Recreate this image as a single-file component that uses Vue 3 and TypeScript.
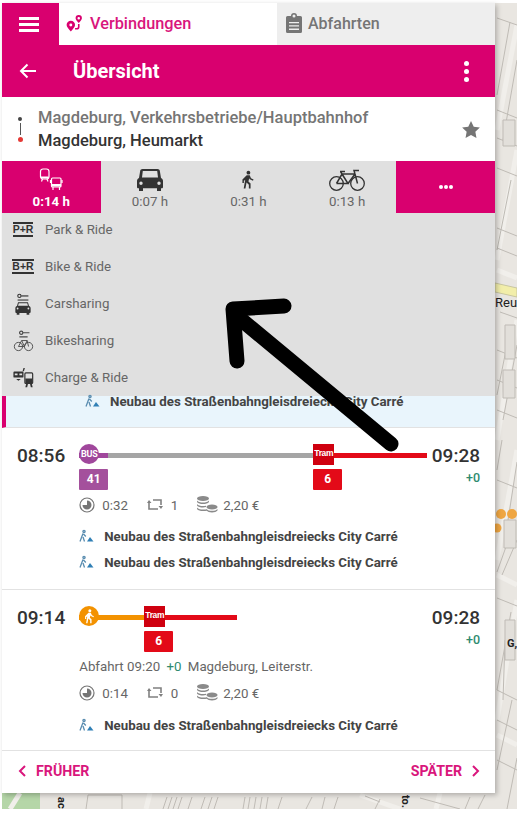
<script setup lang="ts">
const modes = [
  { id: 'pt', time: '0:14 h', active: true },
  { id: 'car', time: '0:07 h', active: false },
  { id: 'walk', time: '0:31 h', active: false },
  { id: 'bike', time: '0:13 h', active: false },
]

const options = [
  { id: 'pr', label: 'Park & Ride', badge: 'P+R' },
  { id: 'br', label: 'Bike & Ride', badge: 'B+R' },
  { id: 'cs', label: 'Carsharing', badge: '' },
  { id: 'bs', label: 'Bikesharing', badge: '' },
  { id: 'cr', label: 'Charge & Ride', badge: '' },
]

const alertText = 'Neubau des Straßenbahngleisdreiecks City Carré'

const trips = [
  {
    dep: '08:56',
    arr: '09:28',
    height: 162,
    duration: '0:32',
    changes: '1',
    depart: null as null | string,
    alerts: 2,
    first: { kind: 'bus', color: '#a5a5a5', lead: '#a0479c', line: '41', lineColor: '#a4509c' },
    trackWidth: 234,
    tramWidth: 114,
  },
  {
    dep: '09:14',
    arr: '09:28',
    height: 161,
    duration: '0:14',
    changes: '0',
    depart: 'Magdeburg, Leiterstr.',
    alerts: 1,
    first: { kind: 'walk', color: '#f39200', lead: '#f39200', line: '', lineColor: '' },
    trackWidth: 65,
    tramWidth: 93,
  },
]

// streets (white bands) and building outlines on the visible map strip
const mapStreets = [
  'M517 25L497 130', 'M517 150L497 260', 'M497 270L517 278', 'M517 320L497 440', 'M517 450L497 560',
  'M497 575L517 585', 'M517 600L497 720', 'M497 735L517 745', 'M20 793L10 809', 'M150 793L146 809',
  'M360 795L400 809', 'M440 793L436 809',
]
const mapLines = [
  'M497 18L517 25', 'M510 22L497 95', 'M517 60L503 140', 'M497 110L517 118', 'M497 138L517 146',
  'M497 168L517 176', 'M511 180L497 250', 'M497 228L517 236', 'M497 248L517 256', 'M500 312L517 318',
  'M511 325L497 395', 'M517 345L503 420', 'M497 350L517 358', 'M497 380L517 388', 'M497 410L517 418',
  'M502 440L497 470', 'M517 462L505 540', 'M497 480L517 488', 'M512 530L497 572', 'M517 540L502 575',
  'M497 598L517 606', 'M511 612L497 690', 'M505 640L503 700', 'M497 690L517 700', 'M512 700L497 770',
  'M497 720L517 730', 'M497 760L517 770', 'M517 758L507 809', 'M88 795H122V809', 'M88 795L86 809',
  'M167 797L163 809', 'M172 797L168 809', 'M177 797L173 809', 'M182 797L178 809', 'M192 797L188 809',
  'M205 797L201 809', 'M212 797L208 809', 'M218 797L214 809', 'M245 797L243 809', 'M250 797L248 809',
  'M256 797L254 809', 'M262 797L260 809', 'M268 797L266 809', 'M282 797L278 809', 'M312 797L306 809',
  'M325 797L322 809', 'M338 797L334 809', 'M365 796L380 802', 'M380 799L375 809', 'M420 798L460 809',
  'M470 797L465 809', 'M485 795L478 809',
]
</script>

<template>
  <div class="screen">
    <div class="map">
      <svg class="map-art" viewBox="0 0 521 816" width="521" height="816">
        <rect x="2" y="793" width="38" height="16" fill="#b5d6a8" />
        <path v-for="d in mapStreets" :key="d" :d="d" stroke="#f1efeb" stroke-width="5" fill="none" />
        <path d="M495 283L517 288V297L495 292Z" fill="#f2eeaa" stroke="#c9c7a0" />
        <path v-for="d in mapLines" :key="d" :d="d" stroke="#bfbbb5" stroke-width="1" fill="none" />
        <path d="M503 120h12v26h-12zM505 325h10v34h-10zM503 370h12v28h-12zM504 520h12v28h-12zM505 620h10v40h-10z" fill="#e2dfda" stroke="#bfbbb5" />
        <circle cx="501" cy="514" r="5" fill="#efa642" />
        <circle cx="512" cy="514" r="5" fill="#efa642" />
        <circle cx="497" cy="528" r="4.500" fill="#efa642" />
        <text x="495" y="307" class="map-label">Reu</text>
        <text x="507" y="647" class="map-label small">G,</text>
        <text x="0" y="0" class="map-label small" transform="translate(58 797) rotate(90)">ac</text>
        <text x="0" y="0" class="map-label small" transform="translate(402 795) rotate(90)">to.</text>
      </svg>
    </div>

    <main class="panel">
      <nav class="tabs">
        <button class="menu" aria-label="Menü">
          <span></span><span></span><span></span>
        </button>
        <div class="tab tab-active">
          <svg width="20" height="19" viewBox="0 0 18 18" fill="#d9006f">
            <path d="M6 6.500a4 4 0 0 1 4 4c0 1.800-2 3.800-4 6-2-2.200-4-4.200-4-6a4 4 0 0 1 4-4zm0 2.600a1.400 1.400 0 1 0 0 2.800 1.400 1.400 0 0 0 0-2.800z" />
            <path fill-rule="evenodd" d="M13.500 1a3 3 0 0 1 3 3c0 1.300-1.500 2.900-3 4.600-1.500-1.700-3-3.300-3-4.600a3 3 0 0 1 3-3zm0 1.800a1.200 1.200 0 1 0 0 2.400 1.200 1.200 0 0 0 0-2.400z" />
            <path d="M13.500 9.500v2.500a2 2 0 0 1-2 2H10" fill="none" stroke="#d9006f" stroke-width="1.500" />
          </svg>
          <span>Verbindungen</span>
        </div>
        <div class="tab">
          <svg width="16" height="20" viewBox="0 0 16 20" fill="#757575">
            <path fill-rule="evenodd" d="M1.500 3H5a3 3 0 0 1 6 0h3.500A1.500 1.500 0 0 1 16 4.500v14a1.500 1.500 0 0 1-1.500 1.500h-13A1.500 1.500 0 0 1 0 18.500v-14A1.500 1.500 0 0 1 1.500 3zM8 1.600a1.500 1.500 0 1 0 0 3 1.500 1.500 0 0 0 0-3zM3 9v1.300h10V9zm0 3.300v1.300h10v-1.300zm0 3.300v1.300h10v-1.300z" />
          </svg>
          <span>Abfahrten</span>
        </div>
      </nav>

      <header class="title-bar">
        <svg class="back" width="18" height="16" viewBox="0 0 18 16" fill="none" stroke="#fff" stroke-width="2">
          <path d="M17 8H2M8.500 1.500L2 8l6.500 6.500" />
        </svg>
        <h1>Übersicht</h1>
        <div class="kebab"><i></i><i></i><i></i></div>
      </header>

      <section class="route">
        <div class="route-marks">
          <i class="mark-start"></i>
          <i class="mark-line"></i>
          <i class="mark-end"></i>
        </div>
        <div class="route-names">
          <div class="from">Magdeburg, Verkehrsbetriebe/Hauptbahnhof</div>
          <div class="to">Magdeburg, Heumarkt</div>
        </div>
        <svg width="18" height="17" viewBox="0 0 24 23" fill="#757575">
          <path d="M12 0l3.700 7.700 8.300 1.100-6.100 5.800 1.500 8.400-7.400-4-7.400 4 1.500-8.400L0 8.800l8.300-1.100z" />
        </svg>
      </section>

      <section class="modes">
        <div v-for="m in modes" :key="m.id" class="mode" :class="{ on: m.active }">
          <svg v-if="m.id === 'pt'" width="24" height="24" viewBox="0 0 24 24" fill="none" stroke="#fff" stroke-width="1.200">
            <rect x="1.500" y="1" width="8.500" height="10" rx="2.500" />
            <path d="M3.500 11l-1 2.500M8 11l1 2.500" />
            <path fill="#fff" stroke="none" d="M2 8.500h7.500v2H2z" />
            <rect x="12.500" y="10" width="9.500" height="9" rx="1" />
            <path d="M14 19v3M20.500 19v3M11.500 12v3M23 12v3" />
            <path fill="#fff" stroke="none" d="M13 16h9v2.500h-9z" />
          </svg>
          <svg v-else-if="m.id === 'car'" width="26" height="24" viewBox="0 0 26 24" fill="#333">
            <path fill-rule="evenodd" d="M5.500 1h15c1.300 0 2 .7 2.300 1.800L24 10c1.200.6 2 1.500 2 3v6c0 .8-.5 1.300-1.300 1.300H24V23h-4v-2.700H6V23H2v-2.700h-.7C.5 20.300 0 19.800 0 19v-6c0-1.500.8-2.400 2-3l1.200-7.200C3.500 1.700 4.200 1 5.500 1zm.3 2L5 9.500h16L20.200 3zM4 13.500a1.700 1.700 0 1 0 0 3.400 1.700 1.700 0 0 0 0-3.400zm18 0a1.700 1.700 0 1 0 0 3.400 1.700 1.700 0 0 0 0-3.400z" />
          </svg>
          <svg v-else-if="m.id === 'walk'" class="walker" width="12" height="20" viewBox="0 0 14 22" fill="#333">
            <circle cx="7.500" cy="2.500" r="2.200" />
            <path d="M5.500 5.500h3.500l1.500 3.500 3 1.500-.7 1.500-3.800-1.800-.6-1.200-.9 3.700 2.500 2.500V21H8v-4.500l-2.700-2.500L4 21H2l1.700-10-1.500.8V14.500H.5V10.500z" />
          </svg>
          <svg v-else width="36" height="24" viewBox="0 0 36 24" fill="none" stroke="#333" stroke-width="1.300">
            <circle cx="7.500" cy="15.500" r="6.800" />
            <circle cx="28.500" cy="15.500" r="6.800" />
            <path d="M7.500 15.500L13 6h13l2.500 9.500M13 6l6 9.500h-11.500M26 6l-7 9.500M11 3.500h5M13 6l-1.500-2.500M26 6l-1-3.500h5" stroke-width="1.500" />
          </svg>
          <span>{{ m.time }}</span>
        </div>
        <div class="mode more on"><b></b><b></b><b></b></div>
      </section>

      <section class="options">
        <div v-for="o in options" :key="o.id" class="option">
          <div class="opt-icon">
            <span v-if="o.badge" class="plate">{{ o.badge }}</span>
            <svg v-else-if="o.id === 'cs'" width="18" height="22" viewBox="0 0 20 24" fill="#333">
              <circle cx="6" cy="3" r="1.800" fill="none" stroke="#333" stroke-width="1.200" />
              <path d="M8 2.400h8v1.300H8z" />
              <path d="M4 7h12v1.200H4z" />
              <path fill-rule="evenodd" d="M4.500 10h11l1.200 4.200c1 .4 1.800 1.200 1.800 2.300V21c0 .6-.4 1-1 1H17v2h-3v-2H6v2H3v-2H2.500c-.6 0-1-.4-1-1v-4.500c0-1.100.8-1.900 1.800-2.300zm.8 1.300l-.8 2.700h11l-.8-2.700zM4 16a1 1 0 1 0 0 2 1 1 0 0 0 0-2zm12 0a1 1 0 1 0 0 2 1 1 0 0 0 0-2z" />
            </svg>
            <svg v-else-if="o.id === 'bs'" width="21" height="22" viewBox="0 0 21 24" fill="none" stroke="#4a4a4a" stroke-width="1">
              <circle cx="8" cy="3" r="1.800" stroke-width="1.300" />
              <path d="M10 3h7M6 7.500h9" stroke-width="1.300" />
              <circle cx="5" cy="18" r="4.500" />
              <circle cx="16" cy="18" r="4.500" />
              <path d="M5 18l3.500-6.500h6l1.500 6.500M8.500 11.500l3 6.500H5M14.500 11.500l-3 6.500" />
            </svg>
            <svg v-else width="21" height="22" viewBox="0 0 22 24" fill="#333">
              <path fill-rule="evenodd" d="M1 5h9c.6 0 1 .4 1 1v4.500c0 .6-.4 1-1 1H1c-.6 0-1-.4-1-1V6c0-.6.4-1 1-1zm.5 2v2h3V7zm5 0v2h3V7z" />
              <path d="M3 13h5l-2.500 2z" />
              <path d="M11 1l1.500 0-1 3.500h-1.500z" />
              <path fill="none" stroke="#333" stroke-width="1.300" d="M13.500 6.500h6.500a1 1 0 0 1 1 1V17a1 1 0 0 1-1 1h-6.500a1 1 0 0 1-1-1V7.500a1 1 0 0 1 1-1z" />
              <path d="M13 12.500h7.500V18H13zM14 18h2l-1 4h-2zM18 18h2l1 4h-2z" />
            </svg>
          </div>
          <span>{{ o.label }}</span>
        </div>
      </section>

      <section class="alert-rest">
        <div class="alert">
          <svg class="alert-icon" width="16" height="14" viewBox="0 0 16 14">
            <path d="M5 1.500a1.100 1.100 0 1 1 0 2.200 1.100 1.100 0 0 1 0-2.200zM4 4.500L1 12.500M4.500 5l2.300 2.500M4 8l1.500 4.500" stroke="#5a8db0" stroke-width="1.300" fill="none" />
            <path d="M8 12.500l3-4.500 3.500 4.500z" fill="#2f7fb5" />
          </svg>
          <span>{{ alertText }}</span>
        </div>
      </section>

      <article v-for="t in trips" :key="t.dep" class="trip" :style="{ height: t.height + 'px' }">
        <div class="time">{{ t.dep }}</div>
        <div class="trip-main">
          <div class="track">
            <div class="leg" :style="{ width: t.trackWidth + 'px' }">
              <div class="leg-bar" :style="{ background: t.first.color }"></div>
              <div v-if="t.first.kind === 'bus'" class="leg-lead" :style="{ background: t.first.lead }"></div>
              <div class="disc" :style="{ background: t.first.lead }">
                <span v-if="t.first.kind === 'bus'">BUS</span>
                <svg v-else width="11" height="15" viewBox="0 0 14 22" fill="#fff">
                  <circle cx="7.500" cy="2.500" r="2.200" />
                  <path d="M5.500 5.500h3.500l1.500 3.500 3 1.500-.7 1.500-3.800-1.800-.6-1.200-.9 3.700 2.500 2.500V21H8v-4.500l-2.700-2.500L4 21H2l1.700-10-1.500.8V14.500H.5V10.500z" />
                </svg>
              </div>
              <span v-if="t.first.line" class="line-tag" :style="{ background: t.first.lineColor }">{{ t.first.line }}</span>
            </div>
            <div class="leg" :style="{ width: t.tramWidth + 'px' }">
              <div class="leg-bar tram-bar"></div>
              <div class="tram-box">Tram</div>
              <span class="line-tag tram-tag">6</span>
            </div>
          </div>
          <div v-if="t.depart" class="depart">
            Abfahrt 09:20 <em>+0</em> {{ t.depart }}
          </div>
          <div class="facts">
            <span class="fact">
              <svg width="16" height="16" viewBox="0 0 16 16" fill="none">
                <circle cx="8" cy="8" r="7" stroke="#757575" stroke-width="1.200" />
                <path d="M8 3.500A4.500 4.500 0 1 1 3.500 8H8z" fill="#757575" />
              </svg>
              {{ t.duration }}
            </span>
            <span class="fact changes">
              <svg width="16" height="14" viewBox="0 0 16 14" fill="none" stroke="#808080" stroke-width="1.600">
                <path d="M6 2h8v5M2 4v7h9" />
                <path d="M0 5l2-3 2.500 3zM11.500 8l2.500 3 2-3z" fill="#808080" stroke="none" />
              </svg>
              {{ t.changes }}
            </span>
            <span class="fact price">
              <svg width="22" height="18" viewBox="0 0 22 18" fill="#8a8a8a">
                <ellipse cx="7" cy="2.500" rx="6" ry="2.500" />
                <path d="M1 4.500c1 1.500 3.500 2 6 2s5-.5 6-2V6c-1 1.500-3.500 2-6 2s-5-.5-6-2z" />
                <path d="M1 8c1 1.500 3.500 2 6 2 1 0 2 0 3-.3V11c-1 .3-2 .5-3 .5-2.500 0-5-.5-6-2z" />
                <path d="M1 11.500c1 1.500 3.500 2 6 2 1 0 2 0 3.500-.3l1 1.300c-1.500.4-3 .5-4.500.5-2.500 0-5-.5-6-2z" />
                <ellipse cx="16" cy="11" rx="5.500" ry="2.500" />
                <path d="M10.500 13c1 1.300 3 1.800 5.500 1.800s4.500-.5 5.500-1.800v1.500c-1 1.300-3 2-5.500 2s-4.500-.7-5.500-2z" />
              </svg>
              2,20 €
            </span>
          </div>
          <div v-for="n in t.alerts" :key="n" class="alert">
            <svg class="alert-icon" width="16" height="14" viewBox="0 0 16 14">
              <path d="M5 1.500a1.100 1.100 0 1 1 0 2.200 1.100 1.100 0 0 1 0-2.200zM4 4.500L1 12.500M4.500 5l2.300 2.500M4 8l1.500 4.500" stroke="#5a8db0" stroke-width="1.300" fill="none" />
              <path d="M8 12.500l3-4.500 3.500 4.500z" fill="#2f7fb5" />
            </svg>
            <span>{{ alertText }}</span>
          </div>
        </div>
        <div class="arrival">
          <div class="time">{{ t.arr }}</div>
          <div class="delay">+0</div>
        </div>
      </article>

      <footer class="pager">
        <span class="page-link">
          <svg width="8" height="12" viewBox="0 0 8 12" fill="none" stroke="#d9167c" stroke-width="2"><path d="M7 1L2 6l5 5" /></svg>
          FRÜHER
        </span>
        <span class="page-link">
          SPÄTER
          <svg width="8" height="12" viewBox="0 0 8 12" fill="none" stroke="#d9167c" stroke-width="2"><path d="M1 1l5 5-5 5" /></svg>
        </span>
      </footer>
    </main>

    <!-- hand-drawn annotation over the screenshot -->
    <svg class="annotation" viewBox="0 0 521 816" width="521" height="816" fill="none" stroke="#000" stroke-linecap="round" stroke-linejoin="round">
      <path d="M391 444L238 317" stroke-width="15" />
      <path d="M237 361L233 309L284 306" stroke-width="15" />
    </svg>
  </div>
</template>

<style scoped>
.screen {
  position: relative;
  width: 521px;
  height: 816px;
  padding: 3px 0 0 2px;
  box-sizing: border-box;
  overflow: hidden;
  background: #fff;
  font-family: Roboto, "Liberation Sans", sans-serif;
}
.map {
  position: absolute;
  left: 2px;
  top: 3px;
  width: 515px;
  height: 806px;
  overflow: hidden;
  background: #e9e6e1;
}
.map-art {
  position: absolute;
  left: -2px;
  top: -3px;
}
.map-label {
  font: 13px Roboto, sans-serif;
  fill: #222;
}
.map-label.small {
  font-size: 11px;
  font-weight: 700;
}
.panel {
  position: relative;
  width: 493px;
  background: #fff;
  box-shadow: 2px 2px 5px rgba(0, 0, 0, 0.25);
}

.tabs {
  display: flex;
  height: 42px;
}
.menu {
  display: flex;
  flex-direction: column;
  align-items: center;
  justify-content: center;
  gap: 3px;
  width: 57px;
  padding: 0 4px 0 0;
  border: 0;
  background: #d9006f;
}
.menu span {
  width: 20px;
  height: 3px;
  background: #fff;
}
.tab {
  display: flex;
  align-items: center;
  gap: 6px;
  width: 218px;
  padding-left: 9px;
  padding-bottom: 2px;
  box-sizing: border-box;
  background: #eeeeee;
  color: #757575;
  font-size: 16px;
  font-weight: 500;
}
.tab-active {
  padding-left: 5px;
  background: #fff;
  color: #d9167c;
  font-size: 16.3px;
}

.title-bar {
  display: flex;
  align-items: center;
  height: 52px;
  padding: 0 26px 0 17px;
  background: #d9006f;
  color: #fff;
}
.back {
  margin-right: 36px;
}
.title-bar h1 {
  flex: 1;
  margin: 0;
  font-size: 20px;
  font-weight: 700;
}
.kebab {
  display: flex;
  flex-direction: column;
  gap: 3px;
}
.kebab i {
  width: 5px;
  height: 5px;
  border-radius: 50%;
  background: #fff;
}

.route {
  display: flex;
  align-items: center;
  height: 64px;
  padding: 0 15px 0 16px;
}
.route-marks {
  display: flex;
  flex-direction: column;
  align-items: center;
  width: 4px;
  margin-right: 16px;
}
.mark-start,
.mark-end {
  width: 4px;
  height: 4px;
  border-radius: 50%;
  background: #444;
}
.mark-end {
  width: 5px;
  height: 5px;
  background: #e53935;
}
.mark-line {
  width: 1px;
  height: 12px;
  margin: 2px 0;
  background: #555;
}
.route-names {
  flex: 1;
  font-size: 16.5px;
  font-weight: 500;
  line-height: 23px;
}
.from {
  color: #757575;
}
.to {
  color: #333;
}

.modes {
  display: flex;
  height: 52px;
  background: #e0e0e0;
}
.mode {
  display: flex;
  flex-direction: column;
  align-items: center;
  justify-content: flex-end;
  width: 99px;
  padding-bottom: 3px;
  box-sizing: border-box;
  color: #666;
  font-size: 13.3px;
  line-height: 16px;
}
.mode svg {
  margin-bottom: 2px;
}
.mode .walker {
  margin-bottom: 4px;
}
.mode.on {
  background: #d9006f;
  color: #fff;
  font-weight: 700;
}
.mode.more {
  flex-direction: row;
  align-items: center;
  justify-content: center;
  gap: 1px;
  margin-left: auto;
  padding: 0;
}
.more b {
  width: 4px;
  height: 4px;
  border-radius: 50%;
  background: #fff;
}

.options {
  display: flex;
  flex-direction: column;
  height: 183px;
  box-sizing: border-box;
  background: #e0e0e0;
}
.option {
  display: flex;
  flex: none;
  align-items: center;
  height: 37px;
  color: #666;
  font-size: 13.3px;
}
.option:first-child {
  margin-top: -2px;
}
.opt-icon {
  display: flex;
  justify-content: center;
  width: 22px;
  margin: 0 11px 0 10px;
}
.plate {
  padding: 0;
  border-top: 2px solid #333;
  border-bottom: 2px solid #333;
  color: #333;
  font: 700 10.5px/11px "Liberation Sans", sans-serif;
}

.alert-rest {
  display: flow-root;
  height: 32px;
  box-sizing: border-box;
  padding-left: 79px;
  border-left: 4px solid #d9006f;
  border-bottom: 1px solid #e2e2e2;
  background: #e9f5fc;
}
.alert-rest .alert {
  height: 16px;
  margin-top: -3px;
}
.alert {
  display: flex;
  align-items: center;
  gap: 9px;
  height: 26px;
  color: #444;
  font-size: 13.3px;
  font-weight: 700;
}
.alert-icon {
  flex: none;
}

.trip {
  position: relative;
  display: flex;
  box-sizing: border-box;
  padding: 16px 22px 0 15px;
  border-bottom: 1px solid #e2e2e2;
  overflow: hidden;
}
.time {
  color: #333;
  font-size: 19px;
  font-weight: 500;
  line-height: 24px;
}
.trip-main {
  flex: 1;
  min-width: 0;
  margin-left: 14px;
}
.track {
  display: flex;
  height: 50px;
}
.leg {
  position: relative;
  height: 100%;
}
.leg-bar {
  position: absolute;
  left: 0;
  right: 0;
  top: 9px;
  height: 5px;
}
.leg-lead {
  position: absolute;
  left: 0;
  top: 9px;
  width: 29px;
  height: 5px;
}
.tram-bar {
  background: #e30a18;
}
.disc {
  position: absolute;
  left: 0;
  top: 0;
  display: flex;
  align-items: center;
  justify-content: center;
  width: 20px;
  height: 20px;
  border-radius: 50%;
  color: #fff;
  font-size: 9px;
  font-weight: 700;
  letter-spacing: -0.2px;
}
.tram-box {
  position: absolute;
  left: 0;
  top: 0;
  width: 21px;
  height: 21px;
  background: #cf000f;
  color: #fff;
  font: 700 8.5px/18px "Liberation Sans", sans-serif;
  letter-spacing: -0.4px;
  text-align: center;
}
.line-tag {
  position: absolute;
  left: 0;
  top: 25px;
  width: 29px;
  height: 21px;
  border-radius: 1px;
  color: #fff;
  font-size: 12px;
  font-weight: 700;
  line-height: 21px;
  text-align: center;
}
.tram-tag {
  background: #e30a18;
}
.depart {
  margin-top: 2px;
  margin-bottom: 6px;
  color: #666;
  font-size: 13.3px;
  line-height: 18px;
}
.depart em {
  margin: 0 3px;
  color: #2e8b6f;
  font-style: normal;
}
.facts {
  display: flex;
  align-items: center;
  height: 22px;
  margin-bottom: 7px;
  color: #666;
  font-size: 13.3px;
}
.depart + .facts {
  margin-bottom: 8px;
}
.fact {
  display: flex;
  align-items: center;
  gap: 7px;
}
.changes {
  margin-left: 19px;
  gap: 8px;
}
.price {
  margin-left: 18px;
  gap: 5px;
}
.arrival {
  position: absolute;
  top: 16px;
  right: 15px;
  text-align: right;
}
.delay {
  margin-top: 1px;
  color: #2e8b6f;
  font-size: 12.5px;
  font-weight: 500;
  line-height: 18px;
}

.pager {
  display: flex;
  justify-content: space-between;
  align-items: center;
  height: 42px;
  padding: 0 15px 2px 16px;
  box-sizing: border-box;
}
.page-link {
  display: flex;
  align-items: center;
  gap: 10px;
  color: #d9167c;
  font-size: 14.2px;
  font-weight: 700;
}

.annotation {
  position: absolute;
  left: 0;
  top: 0;
  pointer-events: none;
}
</style>
